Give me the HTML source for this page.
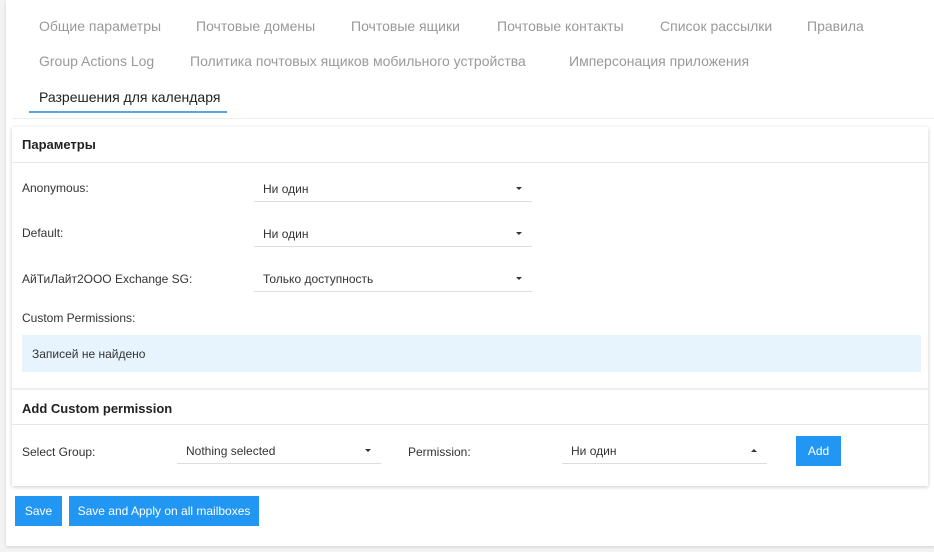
<!DOCTYPE html>
<html><head><meta charset="utf-8"><style>
*{box-sizing:border-box;margin:0;padding:0}
body{width:934px;height:552px;background:#f3f3f3;font-family:"Liberation Sans",sans-serif;font-size:12px;color:#333;position:relative;overflow:hidden}
.a{position:absolute;white-space:nowrap}
.outer{position:absolute;left:6px;top:0;width:928px;height:546px;background:#fff;box-shadow:0 1px 3px rgba(0,0,0,.15)}
.tab{position:absolute;font-size:14px;color:#999}
.card{position:absolute;left:12px;top:127px;width:916px;height:359px;background:#fff;box-shadow:0 1px 4px rgba(0,0,0,.2)}
.hd{position:absolute;left:10px;font-size:13px;font-weight:bold;color:#222}
.line{position:absolute;left:0;right:0;height:1px;background:#e6e6e6}
.dd{position:absolute;height:27px;border-bottom:1px solid #ddd;font-size:12px;padding:7px 9px}
.dd:after{content:"";position:absolute;right:10px;top:12px;border-left:3px solid transparent;border-right:3px solid transparent;border-top:3px solid #333}
.dd.up:after{border-top:none;border-bottom:3px solid #333}
.btn{position:absolute;background:#2196f3;color:#fff;font-size:12px;text-align:center}
</style></head><body>
<div class="outer"></div>
<div class="tab a" style="left:39px;top:18px">Общие параметры</div>
<div class="tab a" style="left:196px;top:18px">Почтовые домены</div>
<div class="tab a" style="left:351px;top:18px">Почтовые ящики</div>
<div class="tab a" style="left:497px;top:18px">Почтовые контакты</div>
<div class="tab a" style="left:660px;top:18px">Список рассылки</div>
<div class="tab a" style="left:807px;top:18px">Правила</div>
<div class="tab a" style="left:39px;top:53px">Group Actions Log</div>
<div class="tab a" style="left:190px;top:53px">Политика почтовых ящиков мобильного устройства</div>
<div class="tab a" style="left:569px;top:53px">Имперсонация приложения</div>
<div class="tab a" style="left:39px;top:89px;color:#222">Разрешения для календаря</div>
<div class="a" style="left:29px;top:111px;width:198px;height:2px;background:#5aa5dc"></div>
<div class="a" style="left:12px;top:118px;width:922px;height:1px;background:#eee"></div>
<div class="card">
 <div class="hd a" style="top:10px">Параметры</div>
 <div class="line" style="top:35px"></div>
 <div class="a" style="left:10px;top:54px">Anonymous:</div>
 <div class="dd" style="left:242px;top:48px;width:278px">Ни один</div>
 <div class="a" style="left:10px;top:99px">Default:</div>
 <div class="dd" style="left:242px;top:93px;width:278px">Ни один</div>
 <div class="a" style="left:10px;top:145px">АйТиЛайт2OOO Exchange SG:</div>
 <div class="dd" style="left:242px;top:138px;width:278px">Только доступность</div>
 <div class="a" style="left:10px;top:184px">Custom Permissions:</div>
 <div class="a" style="left:10px;top:208px;width:899px;height:37px;background:#e8f4fd;padding:12px 10px">Записей не найдено</div>
 <div class="line" style="top:261px;height:2px;background:#f0f0f0"></div>
 <div class="hd a" style="top:274px">Add Custom permission</div>
 <div class="line" style="top:297px"></div>
 <div class="a" style="left:10px;top:318px">Select Group:</div>
 <div class="dd" style="left:165px;top:310px;width:204px">Nothing selected</div>
 <div class="a" style="left:396px;top:318px">Permission:</div>
 <div class="dd up" style="left:550px;top:310px;width:205px">Ни один</div>
 <div class="btn" style="left:784px;top:309px;width:45px;height:30px;line-height:30px">Add</div>
</div>
<div class="btn" style="left:15px;top:496px;width:47px;height:30px;line-height:31px">Save</div>
<div class="btn" style="left:69px;top:496px;width:190px;height:30px;line-height:31px">Save and Apply on all mailboxes</div>
</body></html>
